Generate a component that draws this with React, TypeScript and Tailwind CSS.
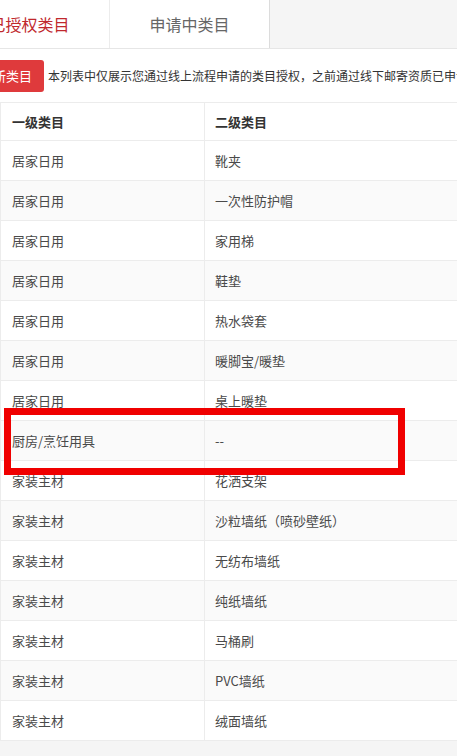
const rows: [string, string][] = [
  ['居家日用', '靴夹'],
  ['居家日用', '一次性防护帽'],
  ['居家日用', '家用梯'],
  ['居家日用', '鞋垫'],
  ['居家日用', '热水袋套'],
  ['居家日用', '暖脚宝/暖垫'],
  ['居家日用', '桌上暖垫'],
  ['厨房/烹饪用具', '--'],
  ['家装主材', '花洒支架'],
  ['家装主材', '沙粒墙纸（喷砂壁纸）'],
  ['家装主材', '无纺布墙纸'],
  ['家装主材', '纯纸墙纸'],
  ['家装主材', '马桶刷'],
  ['家装主材', 'PVC墙纸'],
  ['家装主材', '绒面墙纸'],
];

export default function App() {
  return (
    <div
      className="relative w-[457px] h-[756px] overflow-hidden bg-[#f5f5f5]"
      style={{ fontFamily: '"Noto Sans CJK SC", "Noto Sans", sans-serif' }}
    >
      {/* Tabs */}
      <div className="flex h-[49px] border-b border-[#e6e6e6] ml-[-50px]">
        <div className="w-[160px] shrink-0 bg-white border-r border-[#ececec] flex items-center justify-center text-[16px] text-[#c0282d]">
          已授权类目
        </div>
        <div className="w-[160px] shrink-0 bg-white border-r border-[#dcdcdc] flex items-center justify-center text-[16px] text-[#666]">
          申请中类目
        </div>
        <div className="flex-1 bg-[#f5f5f5]" />
      </div>

      <div className="bg-white">
        {/* Notice */}
        <div className="flex items-center h-[53px] whitespace-nowrap">
          <button className="ml-[-45px] h-[32px] px-3 rounded-[3px] bg-[#df3a3c] text-white text-[13px] shrink-0">
            申请新类目
          </button>
          <span className="ml-[4px] text-[12px] text-[#333]">
            本列表中仅展示您通过线上流程申请的类目授权，之前通过线下邮寄资质已申请的类目请在资质中心查看
          </span>
        </div>

        {/* Table */}
        <div className="border-t border-l border-[#ececec] text-[13px]">
          <div className="flex h-[38px] border-b border-[#ececec] bg-white font-bold text-[#333]">
            <div className="w-[204px] shrink-0 border-r border-[#ececec] flex items-center pl-[11px]">一级类目</div>
            <div className="flex-1 flex items-center pl-[10px]">二级类目</div>
          </div>
          {rows.map(([a, b], i) => (
            <div
              key={i}
              className={`flex h-[40px] border-b border-[#ececec] text-[#4a4a4a] ${
                i % 2 === 1 ? 'bg-[#fafafa]' : 'bg-white'
              }`}
            >
              <div className="w-[204px] shrink-0 border-r border-[#ececec] flex items-center pl-[11px]">{a}</div>
              <div className="flex-1 flex items-center pl-[10px]">{b}</div>
            </div>
          ))}
        </div>
      </div>

      {/* Highlight annotation */}
      <div className="absolute left-[4px] top-[408px] w-[401px] h-[67px] border-[7px] border-[#f00000]" />
    </div>
  );
}
